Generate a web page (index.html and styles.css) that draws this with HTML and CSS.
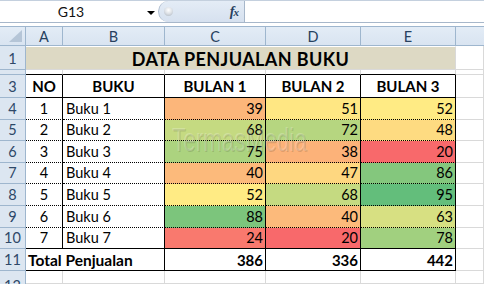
FILE: index.html
```html
<!DOCTYPE html>
<html>
<head>
<meta charset="utf-8">
<link rel="stylesheet" href="styles.css">
</head>
<body>
<div class="app">
  <div class="fbar">
    <div class="namebox"><span class="ref">G13</span><span class="caret"></span></div>
    <div class="fxzone"><span class="knob"></span><span class="fx">f<span class="fxx">x</span></span></div>
    <div class="formula"></div>
  </div>
  <div class="gap"></div>
  <div class="sheet">
    <div class="corner"><span class="tri"></span></div>
    <div class="ch">A</div><div class="ch">B</div><div class="ch">C</div><div class="ch">D</div><div class="ch">E</div><div class="ch last"></div>

    <div class="rh">1</div><div class="title">DATA PENJUALAN BUKU</div><div class="c"></div>

    <div class="rh"></div><div class="c tb"></div><div class="c tb"></div><div class="c tb"></div><div class="c tb"></div><div class="c tb"></div><div class="c"></div>

    <div class="rh">3</div>
    <div class="c hd vb sb">NO</div><div class="c hd vb sb">BUKU</div><div class="c hd vb sb">BULAN 1</div><div class="c hd vb sb">BULAN 2</div><div class="c hd vb sb">BULAN 3</div><div class="c"></div>

    <div class="rh">4</div>
    <div class="c ctr vb db">1</div><div class="c txt vb db">Buku 1</div>
    <div class="c num vb db" style="background:#FCB67A">39</div><div class="c num vb db" style="background:#FFE783">51</div><div class="c num vb db" style="background:#FFEB84">52</div><div class="c"></div>

    <div class="rh">5</div>
    <div class="c ctr vb db">2</div><div class="c txt vb db">Buku 2</div>
    <div class="c num vb db" style="background:#C5DA81">68</div><div class="c num vb db" style="background:#B6D680">72</div><div class="c num vb db" style="background:#FEDB81">48</div><div class="c"></div>

    <div class="rh">6</div>
    <div class="c ctr vb db">3</div><div class="c txt vb db">Buku 3</div>
    <div class="c num vb db" style="background:#ACD37F">75</div><div class="c num vb db" style="background:#FCB279">38</div><div class="c num vb db" style="background:#F8696B">20</div><div class="c"></div>

    <div class="rh">7</div>
    <div class="c ctr vb db">4</div><div class="c txt vb db">Buku 4</div>
    <div class="c num vb db" style="background:#FCBA7B">40</div><div class="c num vb db" style="background:#FED780">47</div><div class="c num vb db" style="background:#84C77D">86</div><div class="c"></div>

    <div class="rh">8</div>
    <div class="c ctr vb db">5</div><div class="c txt vb db">Buku 5</div>
    <div class="c num vb db" style="background:#FFEB84">52</div><div class="c num vb db" style="background:#C5DA81">68</div><div class="c num vb db" style="background:#63BE7B">95</div><div class="c"></div>

    <div class="rh">9</div>
    <div class="c ctr vb db">6</div><div class="c txt vb db">Buku 6</div>
    <div class="c num vb db" style="background:#7CC57C">88</div><div class="c num vb db" style="background:#FCBA7B">40</div><div class="c num vb db" style="background:#D7E082">63</div><div class="c"></div>

    <div class="rh">10</div>
    <div class="c ctr vb sb">7</div><div class="c txt vb sb">Buku 7</div>
    <div class="c num vb sb" style="background:#F9796E">24</div><div class="c num vb sb" style="background:#F8696B">20</div><div class="c num vb sb" style="background:#A1D07F">78</div><div class="c"></div>

    <div class="rh">11</div>
    <div class="c total vb sb">Total Penjualan</div>
    <div class="c num bold vb sb">386</div><div class="c num bold vb sb">336</div><div class="c num bold vb sb">442</div><div class="c"></div>

    <div class="rh cut">12</div><div class="c"></div><div class="c"></div><div class="c"></div><div class="c"></div><div class="c"></div><div class="c"></div>
  </div>
  <div class="wm">TermasMedia</div>
</div>
</body>
</html>
```
FILE: styles.css
```css
html, body {
  margin: 0;
  padding: 0;
  width: 484px;
  height: 284px;
  overflow: hidden;
  background: #fff;
}
* { box-sizing: border-box; }

.app {
  position: relative;
  width: 484px;
  height: 284px;
  font-family: Lato, "Liberation Sans", sans-serif;
  font-size: 14.5px;
  color: #000;
}

/* formula bar */
.fbar {
  display: flex;
  height: 23px;
  border-top: 1px solid #c4d0de;
  border-bottom: 1px solid #a7b7ca;
  background: #fff;
}
.namebox {
  width: 158px;
  display: flex;
  align-items: center;
  position: relative;
}
.ref {
  width: 142px;
  text-align: center;
  font-size: 14px;
  color: #111;
}
.caret {
  width: 0;
  height: 0;
  border-left: 4px solid transparent;
  border-right: 4px solid transparent;
  border-top: 4px solid #000;
  margin-left: 5px;
  margin-top: 2px;
}
.fxzone {
  width: 87px;
  display: flex;
  align-items: center;
  justify-content: space-between;
  background: linear-gradient(#e4ecf6, #d6e1ef);
  border-radius: 11px 0 0 11px;
  border-left: 1px solid #aebdcf;
  border-right: 1px solid #a7b7ca;
  padding: 0 6px 0 5px;
}
.knob {
  width: 9px;
  height: 9px;
  border-radius: 50%;
  background: radial-gradient(circle at 50% 35%, #ffffff 0%, #dfe3e8 45%, #aab2bc 100%);
}
.fx {
  font-family: "Liberation Serif", serif;
  font-style: italic;
  font-weight: bold;
  font-size: 14px;
  color: #27405f;
  letter-spacing: -1px;
}
.fxx { font-size: 11px; }
.formula {
  flex: 1;
  background: #fff;
}
.gap { height: 3px; background: #fff; }

/* sheet grid */
.sheet {
  display: grid;
  grid-template-columns: 26px 37px 102px 101px 95px 95px 28px;
  grid-template-rows: 20px 24px 5px 23px 22px 21px 22px 21px 22px 22px 21px 22px 13px;
}
.corner, .ch {
  background: linear-gradient(#e3ecf6, #d9e4f1);
  border-top: 1px solid #9eb6ce;
  border-bottom: 1px solid #9eb6ce;
  border-right: 1px solid #9eb6ce;
  color: #27415f;
  font-size: 14.5px;
  display: flex;
  align-items: center;
  justify-content: center;
}
.ch.last { border-right: none; }
.corner { position: relative; }
.tri {
  position: absolute;
  right: 3px;
  bottom: 3px;
  width: 0;
  height: 0;
  border-left: 13px solid transparent;
  border-bottom: 12px solid #b5c5d7;
}
.rh {
  background: #dce6f1;
  border-right: 1px solid #9eb6ce;
  border-bottom: 1px solid #9eb6ce;
  color: #2e4868;
  font-size: 14.5px;
  display: flex;
  align-items: flex-end;
  justify-content: center;
  line-height: 18px;
  padding-bottom: 1px;
  overflow: hidden;
}
.rh.cut {
  align-items: flex-start;
  padding-top: 6px;
  padding-bottom: 0;
  border-bottom: none;
}
.c {
  border-right: 1px solid #d9d9d9;
  border-bottom: 1px solid #d9d9d9;
  display: flex;
  align-items: flex-end;
  line-height: 18px;
  padding-bottom: 1px;
  white-space: nowrap;
}
.title {
  grid-column: 2 / 7;
  background: #ddd9c4;
  border-top: 1px solid #fff;
  border-right: 1px solid #d9d9d9;
  border-bottom: 1px solid #d9d9d9;
  display: flex;
  align-items: center;
  justify-content: center;
  font-weight: 700;
  font-size: 18px;
  letter-spacing: 0.4px;
  padding-top: 1px;
}
.tb { border-bottom: 1px solid #000; }
.vb { border-right: 1px solid #000; }
.sb { border-bottom: 1px solid #000; }
.db { border-bottom: 1px dotted #000; }
.hd {
  justify-content: center;
  font-weight: 700;
  font-size: 15px;
  padding-bottom: 2px;
}
.ctr { justify-content: center; }
.txt { padding-left: 3px; }
.num { justify-content: flex-end; padding-right: 2px; }
.bold { font-weight: 700; font-size: 15px; }
.total {
  grid-column: span 2;
  font-weight: 700;
  font-size: 15.5px;
  padding-left: 2px;
}

/* watermark */
.wm {
  position: absolute;
  left: 172px;
  top: 121px;
  font-family: "Liberation Sans", sans-serif;
  font-size: 33px;
  transform: scaleX(0.68);
  transform-origin: left top;
  color: rgba(255, 255, 255, 0.22);
  text-shadow: 1px 1px 0 rgba(0, 0, 0, 0.13);
  pointer-events: none;
  white-space: nowrap;
}
```
